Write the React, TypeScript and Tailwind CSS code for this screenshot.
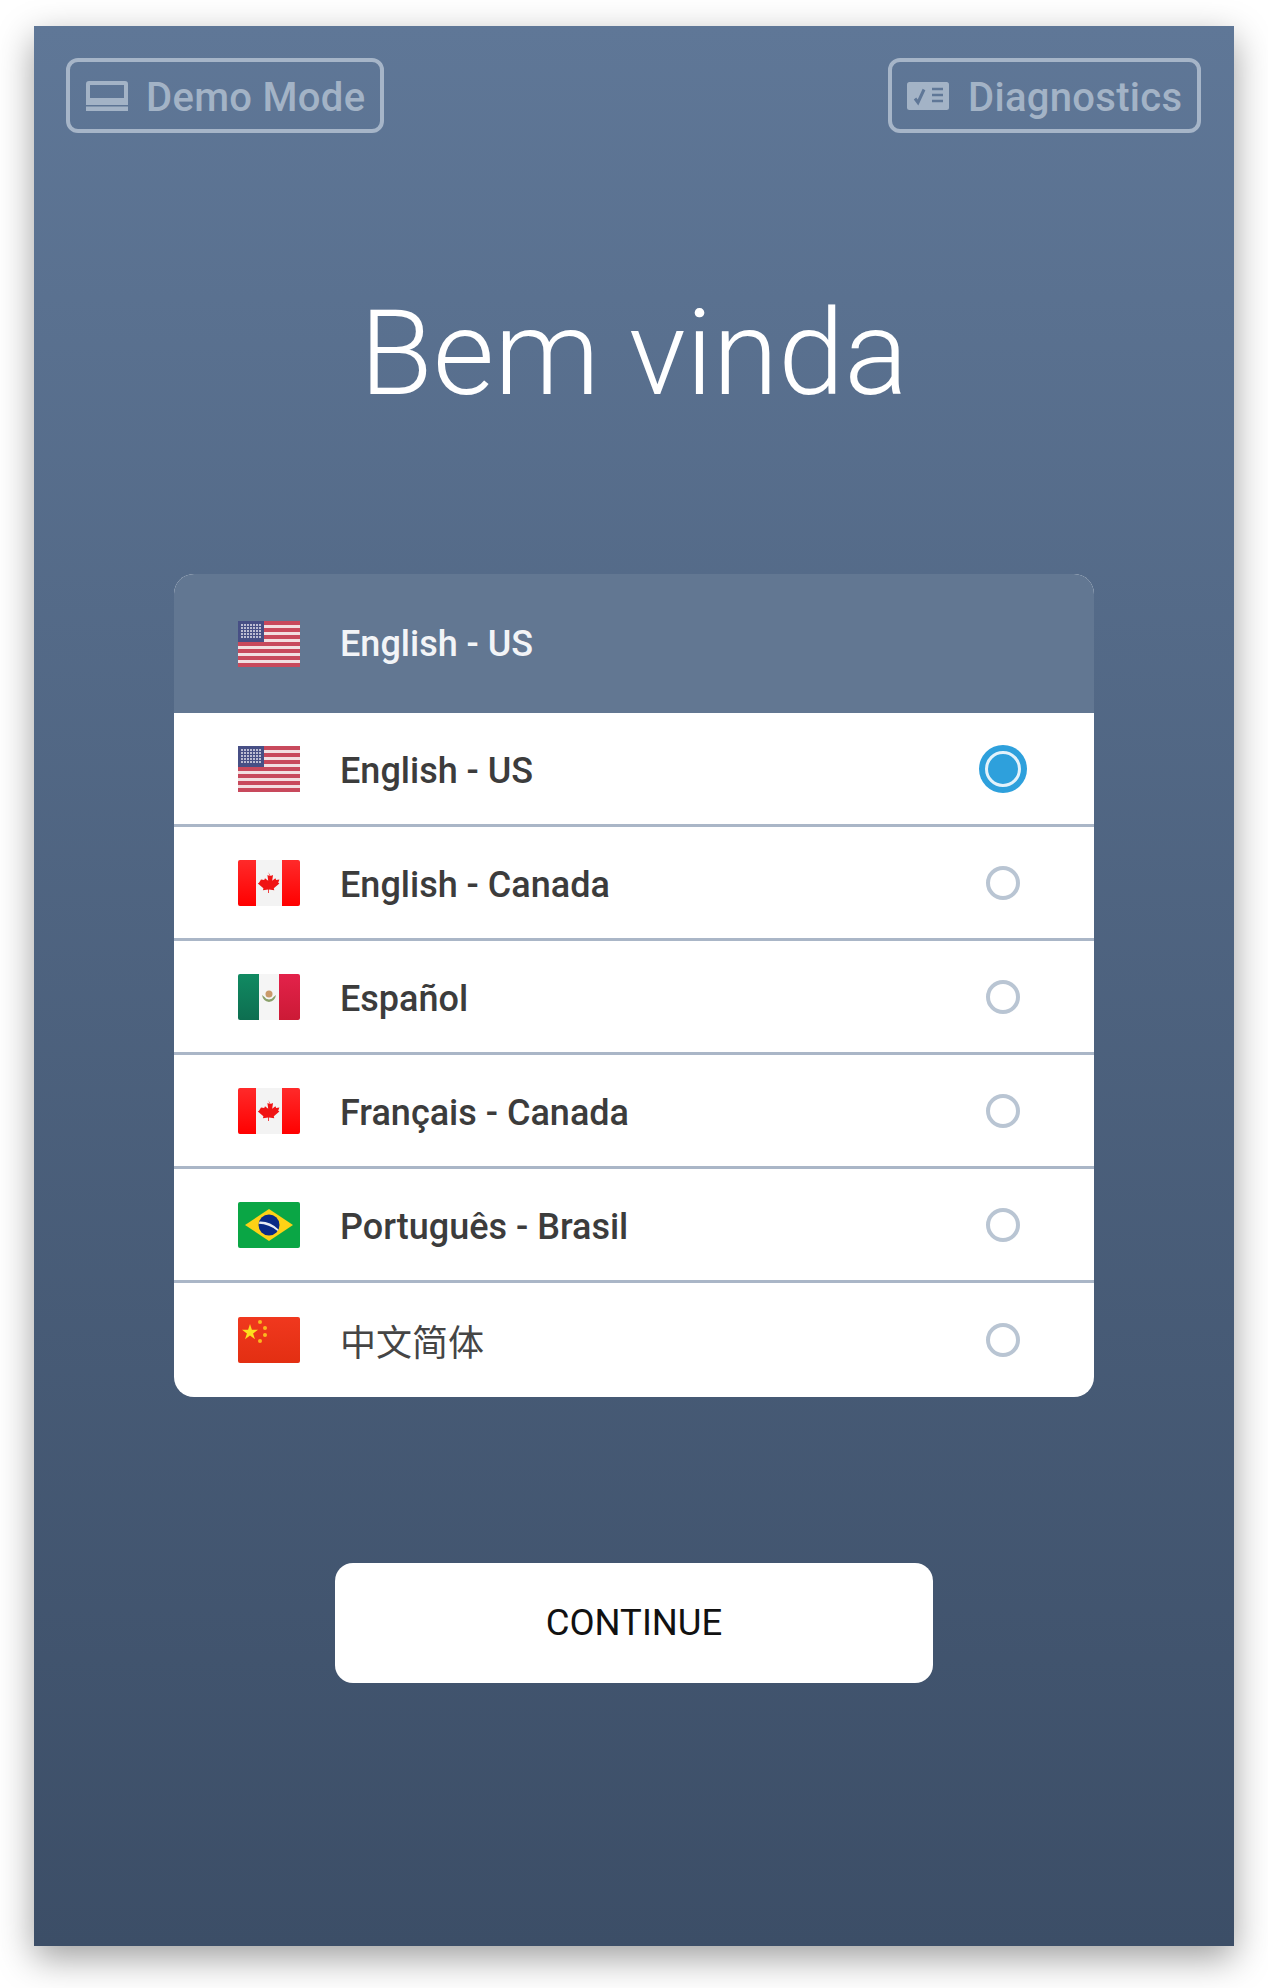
import React from 'react';

const UsFlag = () => (
  <svg viewBox="0 0 62 46" className="w-[62px] h-[46px] shrink-0">
    <rect width="62" height="46" rx="2" fill="#f2dfe1" />
    {[0, 7, 14, 21, 28, 35, 42].map((y) => (
      <rect key={y} x="0" y={y} width="62" height="4" fill="#c8495c" />
    ))}
    <rect width="26" height="21" fill="#474f85" />
    {[4, 7, 10, 13, 16].map((y) =>
      [4, 7, 10, 13, 16, 19, 22].map((x) => (
        <rect key={`${x}-${y}`} x={x - 1} y={y - 1} width="2" height="2" fill="#bcbcd2" />
      ))
    )}
  </svg>
);

const CanadaFlag = () => (
  <svg viewBox="0 0 62 46" className="w-[62px] h-[46px] shrink-0">
    <defs>
      <linearGradient id="ca" x1="0" y1="0" x2="0" y2="1">
        <stop offset="0" stopColor="#ff2a2a" />
        <stop offset="1" stopColor="#ff0000" />
      </linearGradient>
    </defs>
    <rect width="62" height="46" rx="2" fill="#f3f3f3" />
    <path d="M2 0h16v46H2a2 2 0 0 1-2-2V2a2 2 0 0 1 2-2zM44 0h16a2 2 0 0 1 2 2v42a2 2 0 0 1-2 2H44z" fill="url(#ca)" />
    <path d="M31 13l3 5 3-1-1 7 4-3 1 2 4-.5-1.500 4 1.500 1-7 6 .6 2.500-6.600-1v4.500h-1v-4.500l-6.600 1 .6-2.500-7-6 1.500-1L22 22.500l4 .5 1-2 4 3-1-7 3 1z" fill="#f01414" transform="translate(31 21.500) scale(.8) translate(-32 -25)" />
  </svg>
);

const MexicoFlag = () => (
  <svg viewBox="0 0 62 46" className="w-[62px] h-[46px] shrink-0">
    <defs>
      <linearGradient id="mxg" x1="0" y1="0" x2="0" y2="1">
        <stop offset="0" stopColor="#118a62" />
        <stop offset="1" stopColor="#0d6e50" />
      </linearGradient>
      <linearGradient id="mxr" x1="0" y1="0" x2="0" y2="1">
        <stop offset="0" stopColor="#e3224a" />
        <stop offset="1" stopColor="#cc1a36" />
      </linearGradient>
    </defs>
    <rect width="62" height="46" rx="2" fill="#f5f5f5" />
    <path d="M2 0h19v46H2a2 2 0 0 1-2-2V2a2 2 0 0 1 2-2z" fill="url(#mxg)" />
    <path d="M41 0h19a2 2 0 0 1 2 2v42a2 2 0 0 1-2 2H41z" fill="url(#mxr)" />
    <circle cx="31" cy="20" r="3.500" fill="#c99a6a" />
    <path d="M24 21q1 6 7 7q6-1 7-7l-2.500 2q-1 2-4.500 2.500q-3.500-.5-4.500-2.500z" fill="#8aa06a" />
  </svg>
);

const BrazilFlag = () => (
  <svg viewBox="0 0 62 46" className="w-[62px] h-[46px] shrink-0">
    <rect width="62" height="46" rx="2" fill="#0aa645" />
    <path d="M31 7L55 23L31 39L7 23z" fill="#fdd216" />
    <circle cx="31" cy="23" r="10.500" fill="#0a2a86" />
    <path d="M21.500 19.500Q32 19 40.500 27.500L39.500 29Q31 22 20.800 21.800z" fill="#e8ecf4" />
  </svg>
);

const ChinaFlag = () => (
  <svg viewBox="0 0 62 46" className="w-[62px] h-[46px] shrink-0">
    <defs>
      <linearGradient id="cn" x1="0" y1="0" x2="0" y2="1">
        <stop offset="0" stopColor="#f0381e" />
        <stop offset="1" stopColor="#e32f12" />
      </linearGradient>
    </defs>
    <rect width="62" height="46" rx="2" fill="url(#cn)" />
    <path d="M12 7l1.900 5.800H20l-4.900 3.600 1.900 5.800-5-3.600-5 3.600 1.900-5.800L4 12.800h6.100z" fill="#fcdf1e" />
    <circle cx="22" cy="5" r="2" fill="#fbb81e" />
    <circle cx="27" cy="11" r="2" fill="#fbb81e" />
    <circle cx="27" cy="18" r="2" fill="#fbb81e" />
    <circle cx="22" cy="24" r="2" fill="#fbb81e" />
  </svg>
);

const languages = [
  { label: 'English - US', flag: <UsFlag />, selected: true },
  { label: 'English - Canada', flag: <CanadaFlag /> },
  { label: 'Español', flag: <MexicoFlag /> },
  { label: 'Français - Canada', flag: <CanadaFlag /> },
  { label: 'Português - Brasil', flag: <BrazilFlag /> },
  { label: '中文简体', flag: <ChinaFlag />, cjk: true },
];

const Radio = ({ selected }: { selected?: boolean }) =>
  selected ? (
    <div className="w-[48px] h-[48px] rounded-full bg-[#2ea0dc] flex items-center justify-center">
      <div className="w-[36px] h-[36px] rounded-full bg-[#2ea0dc] border-[3px] border-[#e3f2fb]" />
    </div>
  ) : (
    <div className="w-[34px] h-[34px] rounded-full border-[4px] border-[#b9c5d3]" />
  );

const App: React.FC = () => {
  return (
    <div className="min-h-[1988px] bg-white pt-[26px] px-[34px] font-['Roboto',sans-serif]">
      <div className="w-[1200px] h-[1920px] flex flex-col items-center bg-gradient-to-b from-[#5f7797] to-[#3c4e67] shadow-[0_12px_34px_rgba(0,0,0,0.38)]">
        <div className="w-full flex justify-between pt-[32px] pl-[32px] pr-[33px]">
          <div className="w-[318px] h-[75px] flex items-center gap-[18px] pl-[16px] border-[4px] border-[#a6b5c8] rounded-[12px] text-[#a3b3c6] text-[40px] font-medium">
            <svg viewBox="0 0 42 30" className="w-[42px] h-[30px] shrink-0">
              <path d="M3 2h36a1 1 0 0 1 1 1v16H2V3a1 1 0 0 1 1-1z" fill="none" stroke="currentColor" strokeWidth="4" />
              <rect x="0" y="21" width="42" height="3" fill="currentColor" />
              <rect x="0" y="25.500" width="42" height="4.500" fill="currentColor" />
            </svg>
            <span className="pt-[4px] tracking-[0.3px]">Demo Mode</span>
          </div>
          <div className="w-[313px] h-[75px] flex items-center gap-[19px] pl-[15px] border-[4px] border-[#a6b5c8] rounded-[12px] text-[#a3b3c6] text-[40px] font-medium">
            <svg viewBox="0 0 42 28" className="w-[42px] h-[28px] shrink-0">
              <rect width="42" height="28" rx="2.500" fill="currentColor" />
              <path d="M8 16.500l3 4 6-13" fill="none" stroke="#5f7797" strokeWidth="3" />
              <path d="M25 7h11M25 13h11M25 19h11" stroke="#5f7797" strokeWidth="2.500" />
            </svg>
            <span className="pt-[4px] tracking-[0.3px]">Diagnostics</span>
          </div>
        </div>

        <h1 className="mt-[151px] text-[119px] leading-[140px] font-light text-white">Bem vinda</h1>

        <div className="mt-[150px] w-[920px] rounded-[20px] overflow-hidden bg-white">
          <div className="h-[139px] bg-[#627792] flex items-center pl-[64px] gap-[40px]">
            <UsFlag />
            <span className="text-[36px] font-medium text-[#f2f4f7]">English - US</span>
          </div>
          {languages.map((lang, i) => (
            <div
              key={i}
              className="h-[114px] flex items-center pl-[64px] pr-[67px] gap-[40px] border-b-[3px] border-[#aab6c7] last:border-b-0"
            >
              {lang.flag}
              <span
                className={
                  lang.cjk
                    ? "flex-1 text-[36px] text-[#454545] font-['Noto_Sans_CJK_SC','Roboto',sans-serif]"
                    : 'flex-1 pt-[4px] text-[36px] font-medium text-[#3c3c3c]'
                }
              >
                {lang.label}
              </span>
              <div className="w-[48px] flex justify-center">
                <Radio selected={lang.selected} />
              </div>
            </div>
          ))}
        </div>

        <button className="mt-[166px] w-[598px] h-[120px] rounded-[18px] bg-white text-[36.500px] text-[#111111]">
          CONTINUE
        </button>
      </div>
    </div>
  );
};

export default App;
